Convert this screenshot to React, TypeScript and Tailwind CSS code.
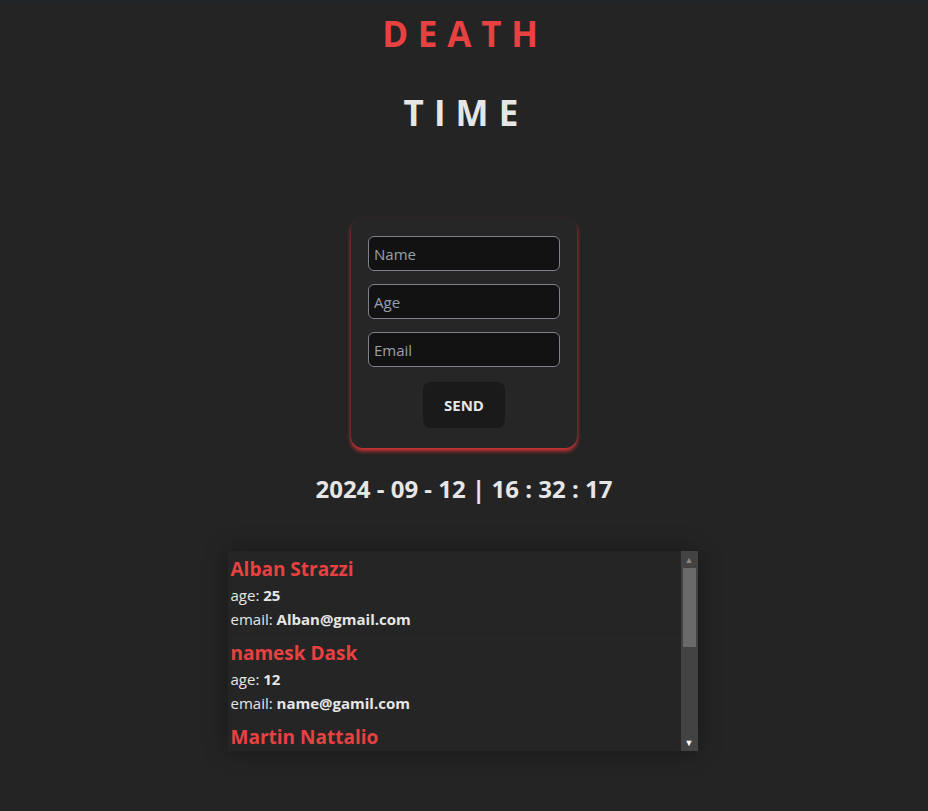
const people = [
  { name: "Alban Strazzi", age: 25, email: "Alban@gmail.com" },
  { name: "namesk Dask", age: 12, email: "name@gamil.com" },
  { name: "Martin Nattalio", age: 31, email: "martin@gmail.com" },
]

const fields = ["Name", "Age", "Email"]

export default function App() {
  return (
    <div className="min-h-screen bg-[#242424] font-['Open_Sans',sans-serif] text-[#e6e6e6]">
      <div className="h-[3px] bg-[#1f232a]" />

      <header className="flex flex-col items-center">
        <h1 className="mt-[7px] pl-[2px] text-[35px] font-bold leading-[48px] tracking-[0.28em] text-[#e84141]">
          DEATH
        </h1>
        <h2 className="mt-[31px] pl-[4px] text-[35px] font-bold leading-[48px] tracking-[0.29em] text-[#e6e6e6]">
          TIME
        </h2>
      </header>

      <main className="flex flex-col items-center">
        <form
          className="mt-[81px] flex w-[226px] flex-col items-center gap-[13px] rounded-xl bg-[#262626] px-[17px] pt-[18px] pb-[20px] shadow-[0_3px_4px_#d93434]"
          onSubmit={(e) => e.preventDefault()}
        >
          {fields.map((f) => (
            <input
              key={f}
              placeholder={f}
              className="h-[35px] w-full rounded-md border border-[#7d818a] bg-[#121212] px-[5px] text-[15px] text-[#e6e6e6] outline-none placeholder:text-[#9aa0aa]"
            />
          ))}
          <button
            type="submit"
            className="mt-[2px] h-[46px] w-[82px] rounded-lg bg-[#1a1a1a] text-[15px] font-bold text-[#e6e6e6]"
          >
            SEND
          </button>
        </form>

        <p className="mt-[25px] text-[24px] font-bold leading-[32px] text-[#e6e6e6]">
          2024 - 09 - 12 | 16 : 32 : 17
        </p>

        <div className="mt-[46px] ml-[-3px] flex h-[200px] w-[470px] overflow-hidden shadow-[0_0_22px_rgba(0,0,0,0.35)]">
          <ul className="flex-1">
            {people.map((p) => (
              <li
                key={p.name}
                className="h-[84px] bg-[#252525] px-[3px] pt-[4px] shadow-[0_2px_4px_rgba(0,0,0,0.3)]"
              >
                <p className="text-[19px] font-bold leading-[28px] text-[#e84141]">{p.name}</p>
                <p className="text-[15px] leading-[24px]">
                  age: <b>{p.age}</b>
                </p>
                <p className="text-[15px] leading-[24px]">
                  email: <b>{p.email}</b>
                </p>
              </li>
            ))}
          </ul>
          <div className="flex w-[17px] flex-col items-center bg-[#434343]">
            <div className="flex h-[17px] items-center justify-center text-[9px] leading-none text-[#888888]">▲</div>
            <div className="h-[79px] w-[13px] bg-[#6a6a6a]" />
            <div className="flex-1" />
            <div className="flex h-[17px] items-center justify-center text-[9px] leading-none text-white">▼</div>
          </div>
        </div>
      </main>
    </div>
  )
}
